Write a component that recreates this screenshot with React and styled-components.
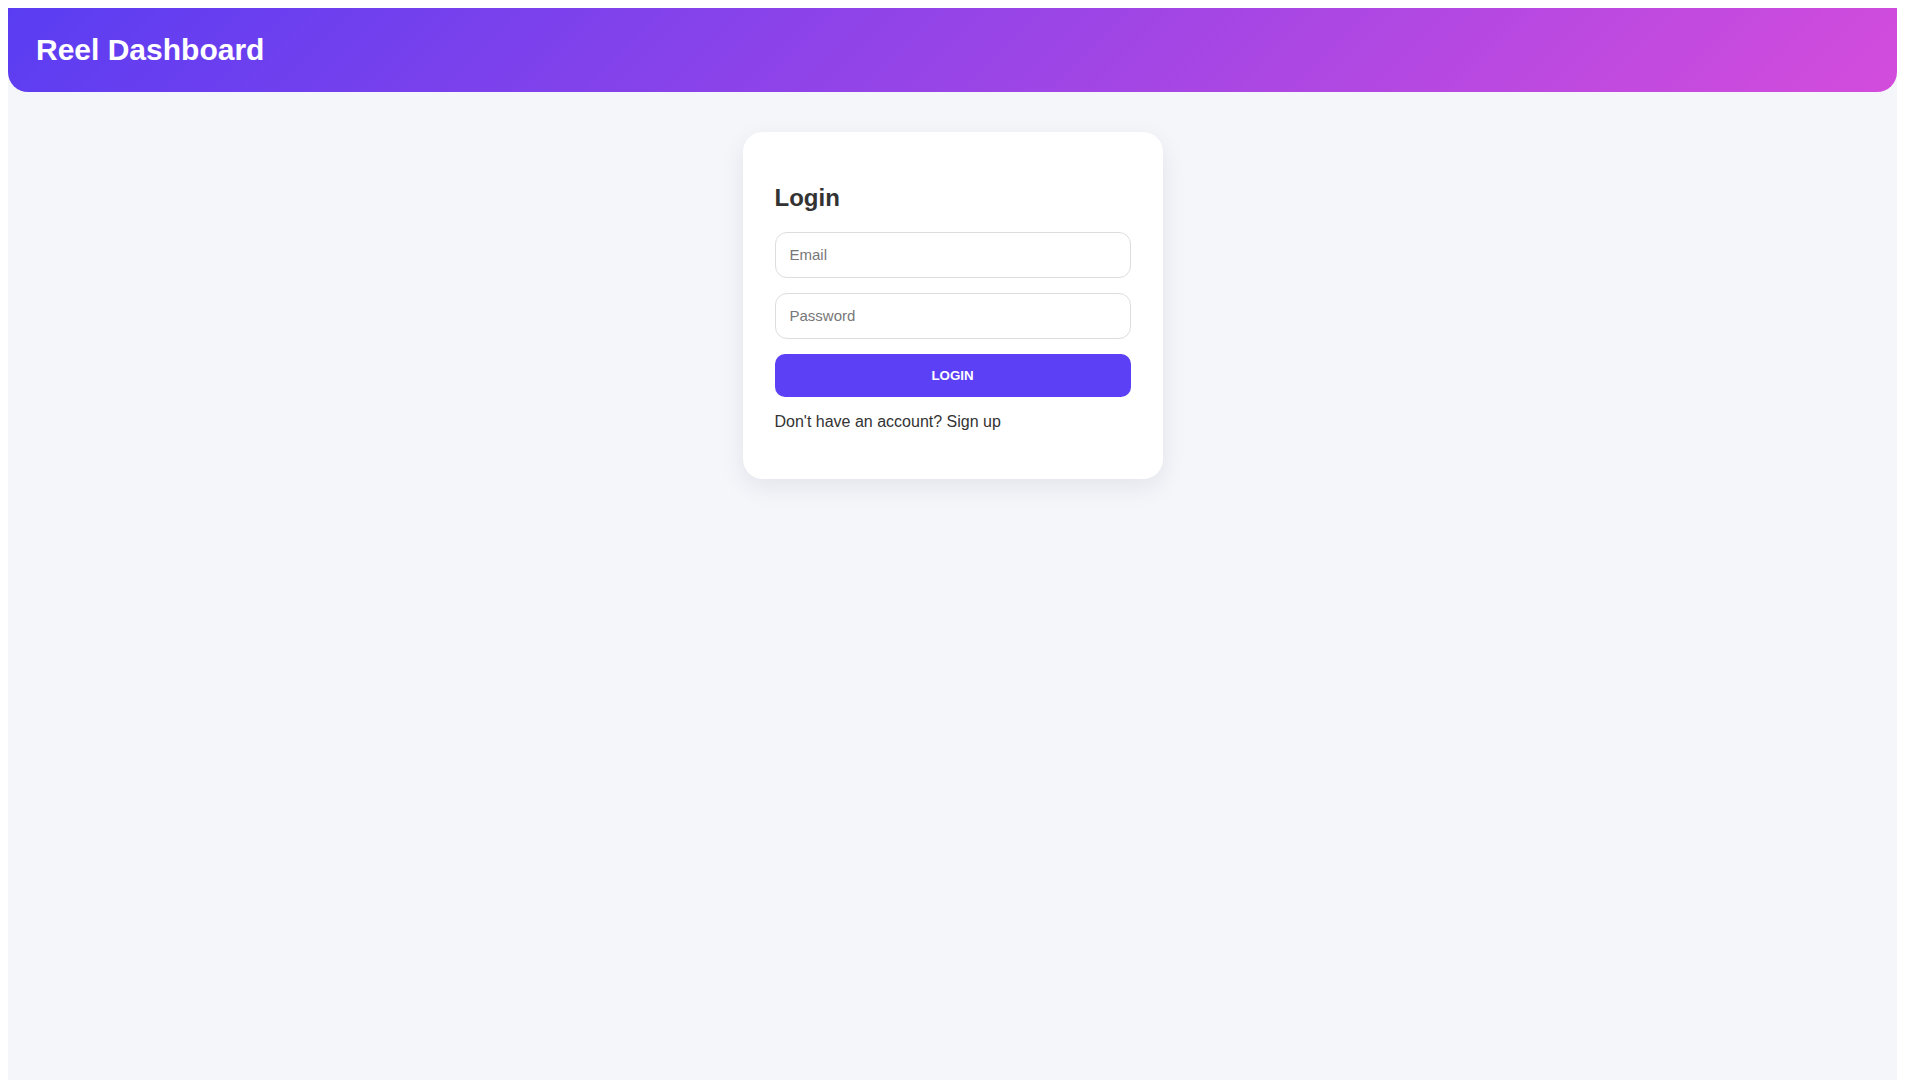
import React from 'react'
import styled, { createGlobalStyle } from 'styled-components'

// the reference was taken with a 15px classic scrollbar; keep that gutter
const GlobalStyle = createGlobalStyle`
  body {
    margin: 8px 23px 8px 8px;
    font-family: "Liberation Sans", Arial, sans-serif;
    background: #fff;
  }
`

const Page = styled.div`
  min-height: 100vh;
  background: #f5f6fa;
`

const Header = styled.header`
  height: 84px;
  display: flex;
  align-items: center;
  padding: 0 28px;
  box-sizing: border-box;
  background: linear-gradient(135deg, #5a3df2, #d34cdc);
  border-radius: 0 0 20px 20px;
`

const Brand = styled.h1`
  margin: 0;
  font-size: 30px;
  font-weight: 700;
  color: #fff;
`

const Card = styled.div`
  width: 420px;
  box-sizing: border-box;
  margin: 40px auto 0;
  padding: 32px;
  background: #fff;
  border-radius: 20px;
  box-shadow: 0 8px 24px rgba(30, 30, 60, 0.08);
`

const Title = styled.h2`
  margin: 0.83em 0;
  font-size: 24px;
  font-weight: 700;
  color: #333;
`

const Input = styled.input`
  display: block;
  width: 100%;
  height: 46px;
  box-sizing: border-box;
  margin-bottom: 15px;
  padding: 0 14px;
  border: 1px solid #ddd;
  border-radius: 12px;
  font-family: inherit;
  font-size: 15px;
  color: #333;
  outline: none;

  &::placeholder {
    color: #777;
  }
`

const Button = styled.button`
  display: block;
  width: 100%;
  height: 43px;
  border: none;
  border-radius: 10px;
  background: #5c40f5;
  color: #fff;
  font-family: inherit;
  font-size: 13.333px;
  font-weight: 700;
  text-transform: uppercase;
  cursor: pointer;
`

const Note = styled.p`
  margin: 16px 0;
  font-size: 16px;
  color: #333;
`

export default function App() {
  return (
    <>
      <GlobalStyle />
      <Page>
        <Header>
          <Brand>Reel Dashboard</Brand>
        </Header>
        <Card>
          <Title>Login</Title>
          <Input type="email" placeholder="Email" />
          <Input type="password" placeholder="Password" />
          <Button>Login</Button>
          <Note>Don't have an account? Sign up</Note>
        </Card>
      </Page>
    </>
  )
}
